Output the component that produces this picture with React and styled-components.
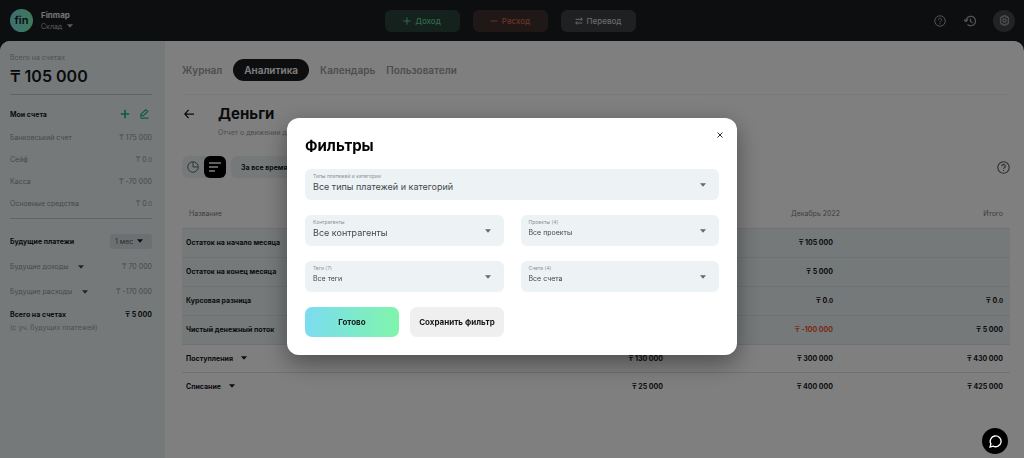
import React from "react";
import styled, { createGlobalStyle, css } from "styled-components";

const GlobalStyle = createGlobalStyle`
  * {
    box-sizing: border-box;
  }
  body {
    margin: 0;
    background: #1a1d21;
    font-family: Inter, "Noto Sans", sans-serif;
    font-size: 7px;
    color: #14171a;
  }
  button, select {
    font-family: inherit;
    color: inherit;
    border: 0;
    margin: 0;
    padding: 0;
    background: none;
    cursor: pointer;
  }
  a {
    color: inherit;
    text-decoration: none;
  }
`;

const Page = styled.div`
  display: flex;
  flex-direction: column;
  min-height: 100vh;
`;

const Header = styled.header`
  display: grid;
  grid-template-columns: 1fr auto 1fr;
  align-items: center;
  height: 41px;
  padding: 0 9px 0 10px;
`;

const Brand = styled.div`
  display: flex;
  align-items: center;
  gap: 8px;
`;

const Logo = styled.div`
  width: 23px;
  height: 23px;
  border-radius: 50%;
  background: linear-gradient(90deg, #7bdcf0, #7cf3ac);
  color: #14171a;
  font-size: 11px;
  font-weight: 600;
  line-height: 22px;
  text-align: center;
`;

const BrandName = styled.div`
  color: #e4e6e8;
  font-size: 8px;
  font-weight: 700;
  line-height: 11px;
`;

const Workspace = styled.button`
  display: flex;
  align-items: center;
  gap: 5px;
  color: #b4b7ba;
  font-size: 7px;
  line-height: 11px;
`;

const QuickActions = styled.div`
  display: flex;
  gap: 13px;
  padding-right: 5px;
`;

const tones = {
  income: css`
    background: #29433a;
    color: #62cf95;
  `,
  expense: css`
    background: #40302d;
    color: #d9664c;
  `,
  transfer: css`
    background: #3d4044;
    color: #d0d2d4;
  `
};

const QuickButton = styled.button`
  display: flex;
  align-items: center;
  justify-content: center;
  gap: 4px;
  width: 75px;
  height: 22px;
  border-radius: 6px;
  font-size: 8px;
  font-weight: 500;
  ${props => tones[props.$tone]}
`;

const Tools = styled.div`
  display: flex;
  align-items: center;
  justify-content: flex-end;
  gap: 16px;
  color: #a2a5a8;
`;

const ToolButton = styled.button`
  display: flex;
  align-items: center;
  justify-content: center;
  width: ${props => (props.$round ? "22px" : "14px")};
  height: ${props => (props.$round ? "22px" : "14px")};
  border-radius: 50%;
  background: ${props => (props.$round ? "#43464a" : "none")};
`;

const Body = styled.div`
  flex: 1;
  display: flex;
  background: #fff;
  border-radius: 10px 10px 0 0;
  overflow: hidden;
`;

const Sidebar = styled.aside`
  flex: none;
  width: 165px;
  padding: 12px 13px 0 10px;
  background: #edf3f5;
`;

const Muted = styled.div`
  color: #9a9fa3;
  font-size: 7px;
  line-height: 10px;
`;

const Balance = styled.div`
  color: #14171a;
  font-size: 16px;
  font-weight: 600;
  line-height: 26px;
`;

const SideSection = styled.section`
  border-top: 1px solid #c3c8cb;
  margin-top: ${props => (props.$first ? "5px" : "4px")};
  padding-top: ${props => (props.$first ? "8px" : "11px")};
`;

const SideRow = styled.div`
  display: flex;
  align-items: center;
  justify-content: space-between;
  height: ${props => (props.$tall ? "25px" : "22px")};
  color: #8d9296;
`;

const SideHead = styled.div`
  display: flex;
  align-items: center;
  justify-content: space-between;
  height: 22px;
  margin-bottom: ${props => (props.$gap ? "2px" : "1px")};
  font-weight: 700;
`;

const SideTotal = styled.div`
  display: flex;
  align-items: center;
  justify-content: space-between;
  padding-top: 3px;
  line-height: 16px;
  font-weight: 700;
`;

const IconRow = styled.div`
  display: flex;
  gap: 7px;
  padding-right: 2px;
  color: #20b487;
`;

const IconButton = styled.button`
  display: flex;
  align-items: center;
  justify-content: center;
  width: 12px;
  height: 12px;
`;

const Expander = styled.button`
  display: flex;
  align-items: center;
  gap: ${props => (props.$spaced ? "10px" : "8px")};
  font-size: 7px;
  font-weight: inherit;
  color: inherit;

  svg {
    color: #44484c;
  }
`;

const PeriodBox = styled.label`
  display: grid;
  align-items: center;
  width: 42px;
  height: 15px;
  border-radius: 3px;
  background: #dbe1e4;

  select,
  svg {
    grid-area: 1 / 1;
  }
  svg {
    justify-self: end;
    margin-right: 9px;
    pointer-events: none;
  }
`;

const PeriodSelect = styled.select`
  appearance: none;
  width: 100%;
  height: 15px;
  padding-left: 5px;
  font-size: 7px;
  color: #55595d;
`;

const Main = styled.main`
  flex: 1;
  min-width: 0;
  padding: 0 14px 20px 17px;
`;

const Tabs = styled.nav`
  display: flex;
  align-items: center;
  gap: 11px;
  height: 54px;
  padding-top: 4px;
  border-bottom: 1px solid #f2f3f4;
`;

const Tab = styled.a`
  font-size: 10px;
  font-weight: 600;
  line-height: 22px;
  color: ${props => (props.$active ? "#fff" : "#999b9d")};
  ${props =>
    props.$active &&
    css`
      padding: 0 11px;
      border-radius: 11px;
      background: #1a1d21;
    `}
`;

const TitleBlock = styled.div`
  display: grid;
  grid-template-columns: 36px 1fr;
  align-items: center;
  padding-top: 7px;
`;

const BackButton = styled.button`
  display: flex;
  align-items: center;
  justify-content: flex-end;
  width: 12px;
  height: 12px;
`;

const PageTitle = styled.h1`
  margin: 0;
  font-size: 15px;
  font-weight: 700;
  line-height: 24px;
`;

const Subtitle = styled.p`
  grid-column: 2;
  margin: 0;
  color: #97999b;
  font-size: 7px;
  line-height: 14px;
`;

const Controls = styled.div`
  display: flex;
  align-items: center;
  gap: 5px;
  margin-top: 16px;
  height: 22px;
`;

const ViewSwitch = styled.div`
  display: flex;
  border-radius: 6px;
  background: #edf3f5;
`;

const ViewButton = styled.button`
  display: flex;
  align-items: center;
  justify-content: center;
  width: 22px;
  height: 22px;
  border-radius: 6px;
  background: ${props => (props.$active ? "#000" : "none")};
  color: ${props => (props.$active ? "#fff" : "#65696d")};
`;

const PeriodButton = styled.button`
  width: 90px;
  height: 22px;
  padding-left: 10px;
  border-radius: 6px;
  background: #edf3f5;
  font-size: 7px;
  font-weight: 700;
  text-align: left;
`;

const HelpButton = styled(IconButton)`
  width: 13px;
  height: 13px;
  margin-left: auto;
  color: #55585b;
`;

const Table = styled.table`
  width: 100%;
  margin-top: 22px;
  border-collapse: collapse;
  table-layout: fixed;
  font-size: 7px;

  th,
  td {
    padding: 0;
  }
`;

const HeadCell = styled.th`
  width: ${props => (props.$name ? "auto" : "170px")};
  height: 28px;
  padding-right: ${props => (props.$last ? "7px" : "0")} !important;
  padding-left: ${props => (props.$name ? "7px" : "0")} !important;
  color: #7c7f82;
  font-weight: 400;
  text-align: ${props => (props.$name ? "left" : "right")};
`;

const Row = styled.tr`
  height: ${props => (props.$total ? "29px" : "28px")};
  background: ${props => (props.$total ? "#edf3f5" : "none")};
  border-top: 1px solid #dfe3e6;
`;

const NameCell = styled.th`
  padding-left: 4px !important;
  font-weight: 700;
  text-align: left;

  svg {
    color: #14171a;
  }
`;

const Amount = styled.td`
  padding-right: 7px !important;
  font-weight: 700;
  text-align: right;
  color: ${props => (props.$negative ? "#f0532d" : "inherit")};
`;

const Cents = styled.span`
  font-size: 6px;
`;

const Overlay = styled.div`
  position: fixed;
  inset: 0;
  display: flex;
  align-items: flex-start;
  justify-content: center;
  padding-top: 118px;
  background: rgba(0, 0, 0, 0.5);
`;

const Dialog = styled.section`
  display: grid;
  gap: 15px;
  width: 450px;
  max-width: 92vw;
  padding: 12px 18px 18px;
  border-radius: 12px;
  background: #fff;
  box-shadow: 0 8px 24px rgba(0, 0, 0, 0.4);
`;

const DialogHead = styled.div`
  display: flex;
  justify-content: space-between;
  height: 24px;
  margin-right: -4px;
`;

const DialogTitle = styled.h2`
  margin: 0;
  padding-top: 4px;
  font-size: 15px;
  font-weight: 700;
  line-height: 24px;
  color: #000;
`;

const CloseButton = styled.button`
  display: flex;
  align-items: center;
  justify-content: flex-end;
  width: 10px;
  height: 10px;
  color: #2b2e31;
`;

const Fields = styled.div`
  display: grid;
  grid-template-columns: 1fr 1fr;
  gap: 15px 17px;
`;

const FieldBox = styled.div`
  grid-column: ${props => (props.$wide ? "1 / -1" : "auto")};
  display: grid;
  grid-template-rows: 11px 20px;
  height: 31px;
  border-radius: 6px;
  background: #edf3f5;
  color: #43474a;

  label {
    grid-area: 1 / 1;
    padding: 3px 0 0 8px;
    font-size: 5px;
    line-height: 8px;
    color: #8b9094;
  }
  select {
    grid-area: 1 / 1 / 3 / 2;
    appearance: none;
    width: 100%;
    padding: 4px 24px 0 8px;
    font-size: ${props => (props.$small ? "7px" : "9px")};
  }
  svg {
    grid-area: 1 / 1 / 3 / 2;
    place-self: center end;
    margin-right: 13px;
    color: #65696d;
    pointer-events: none;
  }
`;

const DialogActions = styled.div`
  display: flex;
  gap: 11px;
`;

const DialogButton = styled.button`
  width: 94px;
  height: 30px;
  border-radius: 7px;
  background: ${props =>
    props.$primary ? "linear-gradient(90deg, #7bdcf0, #7ff5ab)" : "#efefef"};
  font-size: 8px;
  font-weight: 700;
  white-space: nowrap;
`;

const ChatButton = styled.button`
  position: fixed;
  right: 16px;
  bottom: 4px;
  display: flex;
  align-items: center;
  justify-content: center;
  width: 26px;
  height: 26px;
  border-radius: 50%;
  background: #000;
  color: #fff;
`;

const Icon = ({ size = 12, stroke = 2, children }) => (
  <svg
    width={size}
    height={size}
    viewBox="0 0 24 24"
    fill="none"
    stroke="currentColor"
    strokeWidth={stroke}
    aria-hidden="true"
  >
    {children}
  </svg>
);

const Caret = () => (
  <svg width="6" height="4" viewBox="0 0 6 4" aria-hidden="true">
    <path d="M0 0.3h6L3 3.7z" fill="currentColor" />
  </svg>
);

const HelpIcon = ({ size, stroke }) => (
  <Icon size={size} stroke={stroke}>
    <circle cx="12" cy="12" r="10.5" />
    <path d="M8.8 9.5a3.2 3.2 0 1 1 4.8 2.8c-1.1.6-1.6 1.1-1.6 2.2M12 16.4v2.2" />
  </Icon>
);

const accounts = [
  { name: "Банковський счет", value: "₸ 175 000" },
  { name: "Сейф", value: "₸ 0.0" },
  { name: "Касса", value: "₸ -70 000" },
  { name: "Основные средства", value: "₸ 0.0" }
];

const planned = [
  { name: "Будущие доходы", value: "₸ 70 000" },
  { name: "Будущие расходы", value: "₸ -170 000" }
];

const tabs = ["Журнал", "Аналитика", "Календарь", "Пользователи"];

const months = ["Ноябрь 2022", "Декабрь 2022", "Итого"];

const rows = [
  { name: "Остаток на начало месяца", total: true, values: ["", "₸ 105 000", ""] },
  { name: "Остаток на конец месяца", total: true, values: ["", "₸ 5 000", ""] },
  { name: "Курсовая разница", total: true, values: ["", "₸ 0.0", "₸ 0.0"] },
  {
    name: "Чистый денежный поток",
    total: true,
    values: ["", "₸ -100 000", "₸ 5 000"]
  },
  { name: "Поступления", values: ["₸ 130 000", "₸ 300 000", "₸ 430 000"] },
  { name: "Списание", values: ["₸ 25 000", "₸ 400 000", "₸ 425 000"] }
];

const filters = [
  {
    id: "types",
    label: "Типы платежей и категории",
    value: "Все типы платежей и категорий",
    wide: true
  },
  { id: "agents", label: "Контрагенты", value: "Все контрагенты" },
  { id: "projects", label: "Проекты (4)", value: "Все проекты", small: true },
  { id: "tags", label: "Теги (7)", value: "Все теги", small: true },
  { id: "accounts", label: "Счета (4)", value: "Все счета", small: true }
];

const Money = ({ value }) => {
  const [whole, cents] = value.split(".");
  return (
    <span>
      {whole}
      {cents && <Cents>.{cents}</Cents>}
    </span>
  );
};

const TopBar = () => (
  <Header>
    <Brand>
      <Logo>fin</Logo>
      <div>
        <BrandName>Finmap</BrandName>
        <Workspace>
          Склад <Caret />
        </Workspace>
      </div>
    </Brand>
    <QuickActions>
      <QuickButton $tone="income">
        <Icon size={8} stroke={3}>
          <path d="M12 1v22M1 12h22" />
        </Icon>
        Доход
      </QuickButton>
      <QuickButton $tone="expense">
        <Icon size={8} stroke={3}>
          <path d="M1 12h22" />
        </Icon>
        Расход
      </QuickButton>
      <QuickButton $tone="transfer">
        <Icon size={8} stroke={3}>
          <path d="M2 7h20M17 2l5 5-5 4M22 18H2M7 13l-5 5 5 4" />
        </Icon>
        Перевод
      </QuickButton>
    </QuickActions>
    <Tools>
      <ToolButton aria-label="Помощь">
        <HelpIcon size={12} />
      </ToolButton>
      <ToolButton aria-label="История">
        <Icon size={12} stroke={2.5}>
          <path d="M4 12a9.500 9.500 0 1 1 3 7M0 9l4 4 4-4M13 7v6l4 2.500" />
        </Icon>
      </ToolButton>
      <ToolButton $round aria-label="Настройки">
        <Icon size={11} stroke={2.5}>
          <path d="M9.5 2h5l1.3 2.6 2.9-.4 2.6 4.3L19.8 11v2l1.5 2.5-2.6 4.3-2.9-.4L14.5 22h-5l-1.3-2.6-2.9.4-2.6-4.3L4.2 13v-2L2.7 8.5l2.6-4.3 2.9.4z" />
          <circle cx="12" cy="12" r="3.5" />
        </Icon>
      </ToolButton>
    </Tools>
  </Header>
);

const Accounts = () => (
  <Sidebar>
    <Muted>Всего на счетах</Muted>
    <Balance>₸ 105 000</Balance>
    <SideSection $first>
      <SideHead>
        Мои счета
        <IconRow>
          <IconButton aria-label="Добавить счет">
            <Icon size={10} stroke={4}>
              <path d="M12 2v20M2 12h20" />
            </Icon>
          </IconButton>
          <IconButton aria-label="Редактировать счета">
            <Icon size={10} stroke={3}>
              <path d="M3 22h20M4 17l1-5L16 2l5 4-11 10z" />
            </Icon>
          </IconButton>
        </IconRow>
      </SideHead>
      {accounts.map(item => (
        <SideRow key={item.name}>
          <span>{item.name}</span>
          <Money value={item.value} />
        </SideRow>
      ))}
    </SideSection>
    <SideSection>
      <SideHead $gap>
        Будущие платежи
        <PeriodBox>
          <PeriodSelect aria-label="Период">
            <option>1 мес</option>
          </PeriodSelect>
          <Caret />
        </PeriodBox>
      </SideHead>
      {planned.map(item => (
        <SideRow key={item.name} $tall>
          <Expander $spaced>
            {item.name} <Caret />
          </Expander>
          <Money value={item.value} />
        </SideRow>
      ))}
      <SideTotal>
        <span>Всего на счетах</span>
        <span>₸ 5 000</span>
      </SideTotal>
      <Muted>(с уч. будущих платежей)</Muted>
    </SideSection>
  </Sidebar>
);

const Report = () => (
  <Main>
    <Tabs>
      {tabs.map(name => (
        <Tab key={name} href="#" $active={name === "Аналитика"}>
          {name}
        </Tab>
      ))}
    </Tabs>
    <TitleBlock>
      <BackButton aria-label="Назад">
        <Icon size={10} stroke={3}>
          <path d="M24 12H2M11 2L2 12l9 10" />
        </Icon>
      </BackButton>
      <PageTitle>Деньги</PageTitle>
      <Subtitle>Отчет о движении денежных средств</Subtitle>
    </TitleBlock>
    <Controls>
      <ViewSwitch>
        <ViewButton aria-label="Диаграмма">
          <Icon>
            <circle cx="12" cy="12" r="10.5" />
            <path d="M12 2v10h10" />
          </Icon>
        </ViewButton>
        <ViewButton $active aria-label="Таблица">
          <Icon stroke={3}>
            <path d="M0 4h24M0 12h18M0 20h12" />
          </Icon>
        </ViewButton>
      </ViewSwitch>
      <PeriodButton>За все время</PeriodButton>
      <HelpButton aria-label="Справка по отчету">
        <HelpIcon size={13} />
      </HelpButton>
    </Controls>
    <Table>
      <thead>
        <tr>
          <HeadCell $name>Название</HeadCell>
          {months.map(month => (
            <HeadCell key={month} $last={month === "Итого"}>
              {month}
            </HeadCell>
          ))}
        </tr>
      </thead>
      <tbody>
        {rows.map(row => (
          <Row key={row.name} $total={row.total}>
            <NameCell scope="row">
              {row.total ? (
                row.name
              ) : (
                <Expander>
                  {row.name} <Caret />
                </Expander>
              )}
            </NameCell>
            {row.values.map((value, i) => (
              <Amount key={months[i]} $negative={value.includes("-")}>
                <Money value={value} />
              </Amount>
            ))}
          </Row>
        ))}
      </tbody>
    </Table>
  </Main>
);

const FiltersDialog = () => (
  <Overlay>
    <Dialog role="dialog" aria-labelledby="filters-title">
      <DialogHead>
        <DialogTitle id="filters-title">Фильтры</DialogTitle>
        <CloseButton aria-label="Закрыть">
          <Icon size={6} stroke={4}>
            <path d="M2 2l20 20M22 2L2 22" />
          </Icon>
        </CloseButton>
      </DialogHead>
      <Fields>
        {filters.map(item => (
          <FieldBox key={item.id} $wide={item.wide} $small={item.small}>
            <label htmlFor={item.id}>{item.label}</label>
            <select id={item.id}>
              <option>{item.value}</option>
            </select>
            <Caret />
          </FieldBox>
        ))}
      </Fields>
      <DialogActions>
        <DialogButton $primary>Готово</DialogButton>
        <DialogButton>Сохранить фильтр</DialogButton>
      </DialogActions>
    </Dialog>
  </Overlay>
);

const App = () => (
  <>
    <GlobalStyle />
    <Page>
      <TopBar />
      <Body>
        <Accounts />
        <Report />
      </Body>
    </Page>
    <FiltersDialog />
    <ChatButton aria-label="Чат">
      <Icon size={13} stroke={2.5}>
        <path d="M2 22l1.5-5.5A10 10 0 1 1 7.5 20.5z" />
      </Icon>
    </ChatButton>
  </>
);

export default App;
